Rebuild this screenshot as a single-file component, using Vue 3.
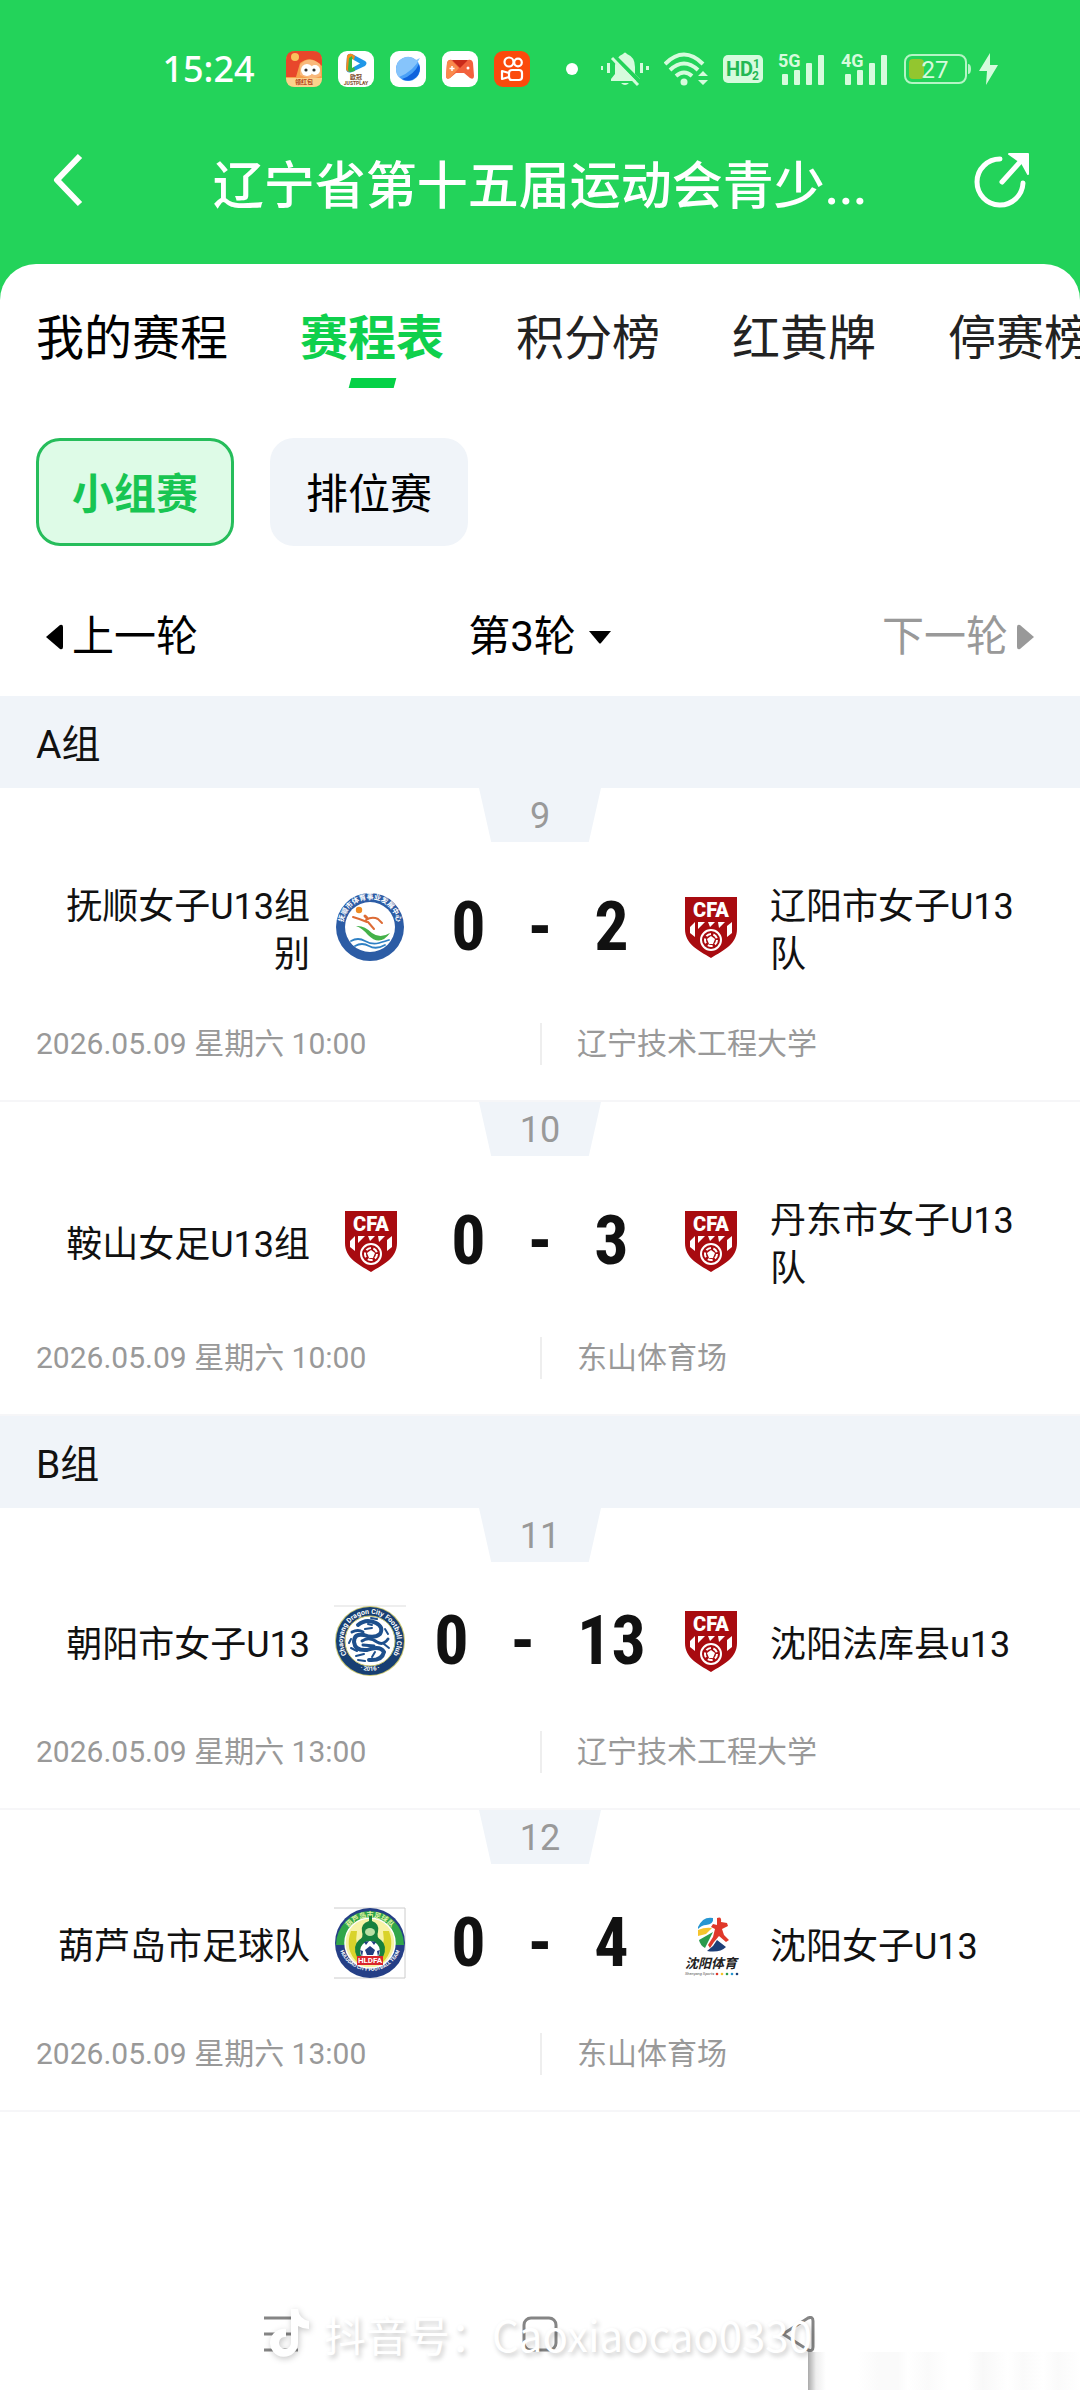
<script setup>
    import { ref } from 'vue'

    const tabs = ['我的赛程', '赛程表', '积分榜', '红黄牌', '停赛榜']
    const activeTab = ref('赛程表')

    const stages = ['小组赛', '排位赛']
    const activeStage = ref('小组赛')

    const groups = [
        {
            name: 'A组',
            matches: [
                { no: 9, home: '抚顺女子U13组别', homeLogo: 'fushun', hs: 0, as: 2, away: '辽阳市女子U13队', awayLogo: 'cfa', time: '2026.05.09 星期六 10:00', venue: '辽宁技术工程大学' },
                { no: 10, home: '鞍山女足U13组', homeLogo: 'cfa', hs: 0, as: 3, away: '丹东市女子U13队', awayLogo: 'cfa', time: '2026.05.09 星期六 10:00', venue: '东山体育场' }
            ]
        },
        {
            name: 'B组',
            matches: [
                { no: 11, home: '朝阳市女子U13', homeLogo: 'dragon', hs: 0, as: 13, away: '沈阳法库县u13', awayLogo: 'cfa', time: '2026.05.09 星期六 13:00', venue: '辽宁技术工程大学' },
                { no: 12, home: '葫芦岛市足球队', homeLogo: 'huludao', hs: 0, as: 4, away: '沈阳女子U13', awayLogo: 'shenyang', time: '2026.05.09 星期六 13:00', venue: '东山体育场' }
            ]
        }
    ]

    function sides(m) {
        return [
            { key: 'home', name: m.home, logo: m.homeLogo },
            { key: 'away', name: m.away, logo: m.awayLogo }
        ]
    }
</script>

<template>
    <div class="page">
        <header class="top">
            <div class="status">
                <span class="clock">15:24</span>
                <div class="apps">
                    <svg viewBox="0 0 36 36">
                        <rect width="36" height="36" rx="9" fill="#f6a04d" />
                        <path d="M0 9Q0 0 9 0H27Q36 0 36 9V15Q25 3 14 12L10 26H0Z" fill="#e8472b" />
                        <circle cx="9" cy="6" r="4" fill="#fbc15c" />
                        <path d="M14 14Q22 4 34 13L35 25Q24 30 14 24Z" fill="#f9b97b" />
                        <ellipse cx="21" cy="19" rx="6" ry="6" fill="#fff" />
                        <ellipse cx="29" cy="19" rx="5" ry="5" fill="#fff" />
                        <circle cx="20" cy="19" r="1.6" fill="#333" />
                        <circle cx="28" cy="19" r="1.6" fill="#333" />
                        <path d="M0 27H36Q36 36 27 36H9Q0 36 0 27Z" fill="#fbd28c" />
                        <text x="18" y="33" text-anchor="middle" font-size="6" font-weight="700" fill="#b3401c">领红包</text>
                    </svg>
                    <svg viewBox="0 0 36 36">
                        <rect width="36" height="36" rx="9" fill="#fff" />
                        <path d="M9 5Q10 2 14 3L27 10Q30 12 27 15L14 21Q9 23 8 18Z" fill="#1f97e8" />
                        <path d="M9 5Q10 2 14 3L17 5L13 20Q9 22 8 18Z" fill="#f28a1d" />
                        <path d="M11 7L14 5L17 20L13 21Q10 21 10 18Z" fill="#31b748" />
                        <path d="M14 8L22 12.500L14 17Z" fill="#fff" />
                        <text x="18" y="28" text-anchor="middle" font-size="6" font-weight="700" fill="#7c4a2b">欧冠</text>
                        <text x="18" y="34" text-anchor="middle" font-size="5" font-weight="700" fill="#7c4a2b">JUSTPLAY</text>
                    </svg>
                    <svg viewBox="0 0 36 36">
                        <rect width="36" height="36" rx="9" fill="#fff" />
                        <circle cx="18" cy="18" r="12" fill="#4aa0f7" />
                        <path d="M29 13A12 12 0 0 1 12 28Q24 24 29 13Z" fill="#0f62dd" />
                        <path d="M6 18A12 12 0 0 1 26 9L30 7Q24 20 9 26Q6 23 6 18Z" fill="#86c4fb" />
                    </svg>
                    <svg viewBox="0 0 36 36">
                        <rect width="36" height="36" rx="9" fill="#fff" />
                        <path d="M5 12Q6 8 10 9L18 12L26 9Q30 8 31 12L32 25Q32 29 28 27L22 22H14L8 27Q4 29 4 25Z" fill="#f2613d" />
                        <path d="M10 9H26L18 17Z" fill="#c92a1a" />
                        <path d="M5 12Q6 9 9 9L17 17L8 27Q4 29 4 25Z" fill="#f98a4c" />
                        <path d="M10 15V20M7.500 17.500H12.500" stroke="#fff" stroke-width="1.500" />
                        <circle cx="26" cy="17" r="1.500" fill="#fff" />
                    </svg>
                    <svg viewBox="0 0 36 36">
                        <rect width="36" height="36" rx="9" fill="#fb4a0c" />
                        <g fill="none" stroke="#fff" stroke-width="2.200">
                            <circle cx="15" cy="11" r="4.500" />
                            <circle cx="24" cy="11.500" r="3.800" />
                            <rect x="15" y="19" width="13" height="10" rx="3" />
                            <path d="M15 22L8 20V28L15 26" stroke-linejoin="round" />
                        </g>
                    </svg>
                </div>
                <div class="signals">
                    <i class="dot"></i>
                    <svg width="48" height="36" viewBox="0 0 48 36">
                        <g fill="#d6fbdd">
                            <path d="M22 3Q24 0 26 3Q34 6 34 16V23L39 28V30H10V28L14 23V14Q15 6 22 3Z" />
                            <path d="M20 32H28Q24 36 20 32Z" />
                            <path d="M6 12H9V22H6ZM0 15H2V19H0ZM39 12H42V22H39ZM45 15H48V19H45Z" />
                        </g>
                        <path d="M12 4L39 31" stroke="#23d35a" stroke-width="4" />
                        <path d="M11 7L37 34" stroke="#d6fbdd" stroke-width="3" />
                    </svg>
                    <svg width="44" height="36" viewBox="0 0 44 36">
                        <g fill="none" stroke="#d6fbdd" stroke-width="4">
                            <path d="M1 13Q20-6 39 13" />
                            <path d="M6 19Q20 6 34 19" />
                            <path d="M12 25Q20 18 28 25" />
                        </g>
                        <circle cx="20" cy="31" r="3.500" fill="#d6fbdd" />
                        <path d="M34 25L39 20L44 25ZM34 29H44L39 34Z" fill="#d6fbdd" />
                    </svg>
                    <svg width="40" height="28" viewBox="0 0 40 28">
                        <rect width="40" height="28" rx="5" fill="#d6fbdd" />
                        <g fill="#23b855" font-weight="700">
                            <text x="3" y="21" font-size="20">HD</text>
                            <text x="30" y="13" font-size="12">1</text>
                            <text x="29" y="25" font-size="12">2</text>
                        </g>
                    </svg>
                    <svg v-for="net in ['5G', '4G']" :key="net" width="48" height="40" viewBox="0 0 48 40">
                        <g fill="#d6fbdd">
                            <text x="0" y="18" font-size="18" font-weight="700">{{ net }}</text>
                            <rect x="4" y="25" width="6" height="11" rx="1" />
                            <rect x="16" y="21" width="6" height="15" rx="1" />
                            <rect x="28" y="14" width="6" height="22" rx="1" />
                            <rect x="40" y="6" width="6" height="30" rx="1" />
                        </g>
                    </svg>
                    <svg width="94" height="32" viewBox="0 0 94 32">
                        <rect x="1" y="2" width="61" height="28" rx="7" fill="none" stroke="#b5f5c5" stroke-width="2" />
                        <rect x="5" y="6" width="15" height="20" rx="4" fill="#93c62f" />
                        <path d="M64 11Q67 11 67 16Q67 21 64 21Z" fill="#b5f5c5" />
                        <text x="31" y="25" text-anchor="middle" font-size="24" fill="#d6fbdd">27</text>
                        <path d="M86 0L75 18H83L82 32L94 12H86Z" fill="#d6fbdd" />
                    </svg>
                </div>
            </div>
            <div class="titlebar">
                <button class="icon-btn" type="button" aria-label="返回">
                    <svg width="36" height="60" viewBox="0 0 36 60">
                        <path d="M32 6L9 30L32 54" fill="none" stroke="#fff" stroke-width="6" stroke-linejoin="round" />
                    </svg>
                </button>
                <h1>辽宁省第十五届运动会青少...</h1>
                <button class="icon-btn" type="button" aria-label="分享">
                    <svg width="60" height="60" viewBox="0 0 60 60">
                        <path d="M28 9A23 23 0 1 0 51 33" fill="none" stroke="#fff" stroke-width="5" stroke-linecap="round" />
                        <path d="M30 32L48 12" fill="none" stroke="#fff" stroke-width="5" stroke-linecap="round" />
                        <path d="M37 4H56V24L50 13Z" fill="#fff" stroke="#fff" stroke-width="2" stroke-linejoin="round" />
                    </svg>
                </button>
            </div>
        </header>

        <main class="sheet">
            <nav class="tabs">
                <button
                    v-for="t in tabs"
                    :key="t"
                    type="button"
                    class="tab"
                    :class="{ active: t === activeTab }"
                    @click="activeTab = t"
                >{{ t }}</button>
            </nav>

            <div class="stages">
                <button
                    v-for="s in stages"
                    :key="s"
                    type="button"
                    class="stage"
                    :class="{ active: s === activeStage }"
                    @click="activeStage = s"
                >{{ s }}</button>
            </div>

            <div class="rounds">
                <button type="button" class="round">
                    <svg viewBox="0 0 36 36"><path d="M10 18L24 6Q27 5 27 8V28Q27 31 24 30Z" /></svg>
                    上一轮
                </button>
                <button type="button" class="round">
                    第3轮
                    <svg viewBox="0 0 36 36"><path d="M13 12H35L25 24Q24 25 23 24Z" /></svg>
                </button>
                <button type="button" class="round" disabled>
                    下一轮
                    <svg viewBox="0 0 36 36"><path d="M26 18L12 6Q9 5 9 8V28Q9 31 12 30Z" /></svg>
                </button>
            </div>

            <section v-for="g in groups" :key="g.name">
                <h2>{{ g.name }}</h2>
                <article v-for="m in g.matches" :key="m.no" class="match">
                    <div class="no">{{ m.no }}</div>
                    <div class="versus">
                        <div v-for="s in sides(m)" :key="s.key" class="team" :class="s.key">
                            <span class="name">{{ s.name }}</span>
                            <svg v-if="s.logo === 'cfa'" class="logo" viewBox="0 0 72 72">
                                <path d="M11 6H63V38C63 53 50 59 37 67C24 59 11 53 11 38Z" fill="#a80b10" />
                                <text x="37" y="26" text-anchor="middle" font-size="20" font-weight="900" fill="#fff">CFA</text>
                                <g fill="#fff">
                                    <path d="M16 36L21 31V46L16 42ZM24 31H31L24 38ZM34 31H41L36 36ZM44 31H51L45 37ZM53 35L58 31V42L53 46Z" />
                                </g>
                                <circle cx="37" cy="49" r="10" fill="#a80b10" stroke="#fff" stroke-width="2" />
                                <circle cx="37" cy="49" r="6" fill="none" stroke="#fff" stroke-width="2" stroke-dasharray="5 2.500" />
                                <path d="M37 45L41 48L39 53H35L33 48Z" fill="#fff" />
                            </svg>
                            <svg v-else-if="s.logo === 'fushun'" class="logo" viewBox="0 0 72 72">
                                <defs><path id="ringFushun" d="M10.500 44A27 27 0 1 1 61.500 44" /></defs>
                                <circle cx="36" cy="36" r="34" fill="#2c5ca5" />
                                <circle cx="36" cy="36" r="25" fill="#fff" />
                                <text font-size="7" font-weight="700" fill="#fff">
                                    <textPath href="#ringFushun" startOffset="50%" text-anchor="middle">抚顺市体育事业发展中心</textPath>
                                </text>
                                <circle cx="25" cy="19" r="3.200" fill="#ee8b22" />
                                <g fill="none" stroke-linecap="round">
                                    <path d="M19 26Q26 28 33 31M32 29Q38 25 44 28L48 32M34 31L40 38" stroke="#dd6b35" stroke-width="2" />
                                    <path d="M33 27L31 25" stroke="#dd6b35" stroke-width="3" />
                                    <path d="M17 50Q24 46 31 50T45 52T55 49" stroke="#2f80c4" stroke-width="1.800" />
                                    <path d="M21 55Q28 51 35 55T51 54" stroke="#2f80c4" stroke-width="1.800" />
                                </g>
                                <path d="M22 35Q30 34 38 42Q46 48 56 42Q46 56 34 44Q28 37 22 35Z" fill="#44b149" />
                            </svg>
                            <svg v-else-if="s.logo === 'dragon'" class="logo" viewBox="0 0 72 72">
                                <defs>
                                    <path id="ringDragon" d="M17 55A27 27 0 1 1 55 55" />
                                    <path id="ringYear" d="M22 62Q36 70 50 62" />
                                </defs>
                                <path d="M0 1H72" stroke="#ddd" />
                                <circle cx="36" cy="36" r="35" fill="#c9c670" />
                                <circle cx="36" cy="36" r="34" fill="#173f73" />
                                <circle cx="36" cy="36" r="25" fill="#fff" stroke="#c9c670" />
                                <g fill="#fff" font-weight="700">
                                    <text font-size="7"><textPath href="#ringDragon" startOffset="50%" text-anchor="middle">Chaoyang Dragon City Football Club</textPath></text>
                                    <text font-size="6"><textPath href="#ringYear" startOffset="50%" text-anchor="middle">· 2016 ·</textPath></text>
                                </g>
                                <g fill="none" stroke="#1d4f8c" stroke-linecap="round">
                                    <path d="M24 20Q32 13 42 18Q50 22 46 29Q40 34 30 30Q20 28 20 37Q21 46 33 45Q46 40 50 47Q48 56 35 55" stroke-width="4" />
                                    <path d="M18 27Q24 24 29 27M28 36Q35 31 43 37Q49 41 54 34M29 40L40 41" stroke-width="3" />
                                    <path d="M17 43L23 46M22 51L30 49M41 47L38 52M51 24L54 29M31 24L38 23M50 39L55 43M24 55L31 56M37 13L43 14M34 19L38 20M17 34L15 38" stroke-width="2" />
                                </g>
                            </svg>
                            <svg v-else-if="s.logo === 'huludao'" class="logo" viewBox="0 0 72 72">
                                <defs>
                                    <path id="ringHldTop" d="M10 30A27 27 0 0 1 62 30" />
                                    <path id="ringHldBottom" d="M5 40A32 32 0 0 0 67 40" />
                                </defs>
                                <path d="M0 1H71V71H0" fill="none" stroke="#ccc" />
                                <circle cx="36" cy="36" r="35" fill="#253f86" />
                                <path d="M2 38A34 34 0 1 1 70 38Z" fill="#31a64a" />
                                <circle cx="36" cy="36" r="25" fill="#f7f2a6" stroke="#fff" stroke-width="1.500" />
                                <text font-size="7" font-weight="700" fill="#e2f3a6"><textPath href="#ringHldTop" startOffset="50%" text-anchor="middle">葫芦岛市足球队</textPath></text>
                                <text font-size="5" font-weight="700" fill="#fff"><textPath href="#ringHldBottom" startOffset="50%" text-anchor="middle">HULUDAO CITY FOOTBALL TEAM</textPath></text>
                                <path d="M17 24Q10 43 24 56L29 49Q20 40 23 24ZM55 24Q62 43 48 56L43 49Q52 40 49 24Z" fill="#d9d32b" />
                                <path d="M35 9H38V14Q46 17 44 25Q42 30 47 33Q54 39 49 50H23Q18 39 25 33Q30 30 28 25Q26 17 35 14Z" fill="#16813d" />
                                <ellipse cx="36" cy="25" rx="5" ry="4" fill="#b9e0a4" />
                                <circle cx="36" cy="44" r="10" fill="#fff" />
                                <path d="M36 39L41 43L39 48H33L31 43ZM30 35L35 34L32 38ZM42 35L37 34L40 38ZM26 43L29 44L28 50ZM46 43L43 44L44 50Z" fill="#213e80" />
                                <rect x="23" y="49" width="26" height="9" fill="#d9252c" />
                                <text x="36" y="56" text-anchor="middle" font-size="8" font-weight="700" fill="#fff">HLDFA</text>
                            </svg>
                            <svg v-else class="logo" viewBox="0 0 72 72">
                                <path d="M24 20Q29 9 39 11Q40 17 32 18Q28 18 24 22Z" fill="#2695d1" />
                                <path d="M24 23Q31 20 38 21L32 27L24 29Z" fill="#f5c42d" />
                                <path d="M25 33L39 25L31 41Q26 38 25 33Z" fill="#2a9b4c" />
                                <path d="M43 11Q48 9 47 15L53 16L54 19L48 22L50 28L55 33L52 35L45 29L40 35L36 41L34 38L39 30L41 22L37 20L39 17L43 18Z" fill="#e0392a" />
                                <path d="M39 39L43 33L52 40Q46 46 33 44Z" fill="#1d3f78" />
                                <text x="37" y="61" text-anchor="middle" font-size="13" font-weight="700" font-style="italic" fill="#222">沈阳体育</text>
                                <text x="11" y="68" font-size="4" font-style="italic" fill="#555">Shenyang Sports</text>
                                <circle cx="43" cy="67" r="1.300" fill="#e0392a" />
                                <circle cx="48" cy="67" r="1.300" fill="#f5c42d" />
                                <circle cx="53" cy="67" r="1.300" fill="#2a9b4c" />
                                <circle cx="58" cy="67" r="1.300" fill="#2695d1" />
                                <circle cx="63" cy="67" r="1.300" fill="#1d3f78" />
                            </svg>
                        </div>
                        <div class="score">
                            <span>{{ m.hs }}</span>
                            <span>-</span>
                            <span>{{ m.as }}</span>
                        </div>
                    </div>
                    <div class="info">
                        <span class="time">{{ m.time }}</span>
                        <span class="venue">{{ m.venue }}</span>
                    </div>
                </article>
            </section>
        </main>

        <footer class="sysnav">
            <svg class="menu" width="36" height="36" viewBox="0 0 36 36">
                <path d="M0 2H34M0 18H34M0 34H34" stroke="#858585" stroke-width="3" />
            </svg>
            <svg width="36" height="36" viewBox="0 0 36 36">
                <rect x="2" y="2" width="32" height="32" rx="7" fill="none" stroke="#858585" stroke-width="3" />
            </svg>
            <svg class="back" width="36" height="36" viewBox="0 0 36 36">
                <path d="M3 18L28 2Q33 0 33 5V31Q33 36 28 34Z" fill="none" stroke="#858585" stroke-width="3" />
            </svg>
            <div class="mark">
                <svg width="42" height="54" viewBox="0 0 42 54">
                    <path d="M23 2H30Q31 12 41 14V22Q35 22 30 19V36A14 14 0 1 1 18 22V30A6 6 0 1 0 23 36Z" fill="#fff" />
                </svg>
                <span>抖音号：Caoxiaocao0330</span>
            </div>
            <div class="smear"></div>
        </footer>
    </div>
</template>

<style>
    body {
        margin: 0;
        background: #fff;
    }
</style>

<style scoped>
    .page {
        position: relative;
        display: flex;
        flex-direction: column;
        min-height: 100vh;
        overflow: hidden;
        color: #111;
        background: #fff;
        font-family: Roboto, "Noto Sans CJK SC", sans-serif;
    }

    button {
        padding: 0;
        border: 0;
        background: none;
        color: inherit;
        font: inherit;
        white-space: nowrap;
    }

    svg {
        display: block;
        flex: none;
    }

    h1,
    h2 {
        margin: 0;
    }

    /* green header */
    .top {
        background: #23d35a;
        color: #fff;
        padding-bottom: 81px;
    }

    .status {
        display: flex;
        align-items: center;
        justify-content: center;
        height: 138px;
        padding-left: 80px;
    }

    .clock {
        font: 500 36px/48px "Noto Sans", sans-serif;
        margin-right: 31px;
    }

    .apps,
    .signals {
        display: flex;
        align-items: center;
        gap: 16px;
    }

    .apps svg {
        width: 36px;
        height: 36px;
    }

    .signals {
        gap: 15px;
        margin-left: 36px;
    }

    .dot {
        width: 12px;
        height: 12px;
        margin-right: 8px;
        border-radius: 50%;
        background: #fff;
    }

    .titlebar {
        display: flex;
        align-items: center;
        justify-content: space-between;
        height: 81px;
        padding: 3px 48px 0;
        box-sizing: border-box;
    }

    .icon-btn {
        display: flex;
        width: 60px;
    }

    h1 {
        padding-top: 14px;
        font-size: 51px;
        line-height: 72px;
        font-weight: 500;
        white-space: nowrap;
    }

    /* white sheet */
    .sheet {
        margin-top: -36px;
        border-radius: 36px 36px 0 0;
        background: #fff;
    }

    .tabs {
        display: flex;
        gap: 72px;
        padding: 39px 36px 0;
        overflow: hidden;
    }

    .tab {
        display: flex;
        flex-direction: column;
        align-items: center;
        height: 87px;
        color: #222;
        font-size: 48px;
        line-height: 72px;
    }

    .tab:first-child {
        color: #000;
    }

    .tab.active {
        color: #0fd04c;
        font-weight: 700;
    }

    .tab.active::after {
        content: "";
        width: 45px;
        height: 10px;
        margin-top: 3px;
        background: #05d146;
        transform: skewX(-15deg);
    }

    .stages {
        display: flex;
        gap: 36px;
        padding: 48px 36px 0;
    }

    .stage {
        height: 108px;
        padding: 0 36px 4px;
        border-radius: 24px;
        background: #f0f4f9;
        color: #000;
        font-size: 42px;
    }

    .stage.active {
        padding: 0 33px 4px;
        border: 3px solid #26bd5b;
        background: #defbe7;
        color: #18c552;
        font-weight: 700;
    }

    .rounds {
        display: grid;
        grid-template-columns: 1fr auto 1fr;
        align-items: center;
        height: 118px;
        padding: 32px 36px 0;
    }

    .round {
        display: flex;
        align-items: center;
        color: #000;
        font-size: 42px;
        line-height: 60px;
    }

    .round svg {
        width: 36px;
        height: 36px;
        fill: currentColor;
    }

    .round:disabled {
        justify-self: end;
        color: #999;
    }

    h2 {
        height: 92px;
        padding: 0 36px;
        background: #f0f4f9;
        font-size: 39px;
        line-height: 98px;
        font-weight: 400;
    }

    .match {
        border-bottom: 2px solid #f6f6f8;
    }

    .no {
        width: 122px;
        height: 54px;
        margin: 0 auto;
        background: #f0f4f9;
        clip-path: polygon(0 0, 100% 0, 90% 100%, 10% 100%);
        color: #999;
        font-size: 36px;
        line-height: 56px;
        text-align: center;
    }

    .versus {
        display: grid;
        grid-template-columns: 1fr 268px 1fr;
        align-items: center;
        min-height: 84px;
        padding: 37px 36px 48px;
    }

    .team {
        display: flex;
        align-items: center;
        gap: 24px;
        grid-row: 1;
    }

    .home {
        grid-column: 1;
        text-align: right;
    }

    .away {
        grid-column: 3;
        flex-direction: row-reverse;
    }

    .name {
        flex: 1;
        margin-bottom: -4px;
        padding-top: 4px;
        font-size: 36px;
        line-height: 48px;
        word-break: break-all;
    }

    .logo {
        width: 72px;
        height: 72px;
    }

    .score {
        display: flex;
        grid-column: 2;
        grid-row: 1;
        justify-content: center;
        gap: 42px;
        font-family: "Roboto Condensed", "Liberation Sans Narrow", Roboto, sans-serif;
        font-size: 68px;
        line-height: 84px;
        font-weight: 700;
    }

    .info {
        display: grid;
        grid-template-columns: 1fr 1fr;
        padding: 0 36px 35px;
        color: #999;
        font-size: 30px;
        line-height: 42px;
    }

    .venue {
        padding-left: 35px;
        border-left: 2px solid #eee;
    }

    /* system navigation and the caption over it */
    .sysnav {
        position: relative;
        display: flex;
        align-items: center;
        justify-content: center;
        gap: 222px;
        height: 132px;
        margin-top: auto;
    }

    .mark {
        position: absolute;
        inset: 0;
        display: flex;
        align-items: center;
        justify-content: center;
        gap: 14px;
        color: #fff;
        font: 400 42px/60px "Noto Sans CJK SC", sans-serif;
        text-shadow: 2px 3px 5px rgba(0, 0, 0, 0.22);
    }

    .mark svg {
        filter: drop-shadow(1px 2px 3px rgba(0, 0, 0, 0.22));
    }

    .smear {
        position: absolute;
        right: 0;
        bottom: 10px;
        width: 272px;
        height: 38px;
        background: linear-gradient(90deg, #aaa, #eee 8px, #fff 18px, #fff 50px, #fafafa 70px, #fafafa 90px, #fff 100px, #fafafa 120px, #fff 140px, #fff 160px, #f8f8f8 175px, #fff 200px, #fafafa 215px, #fff 235px, #fafafa 250px, #fff);
    }
</style>
